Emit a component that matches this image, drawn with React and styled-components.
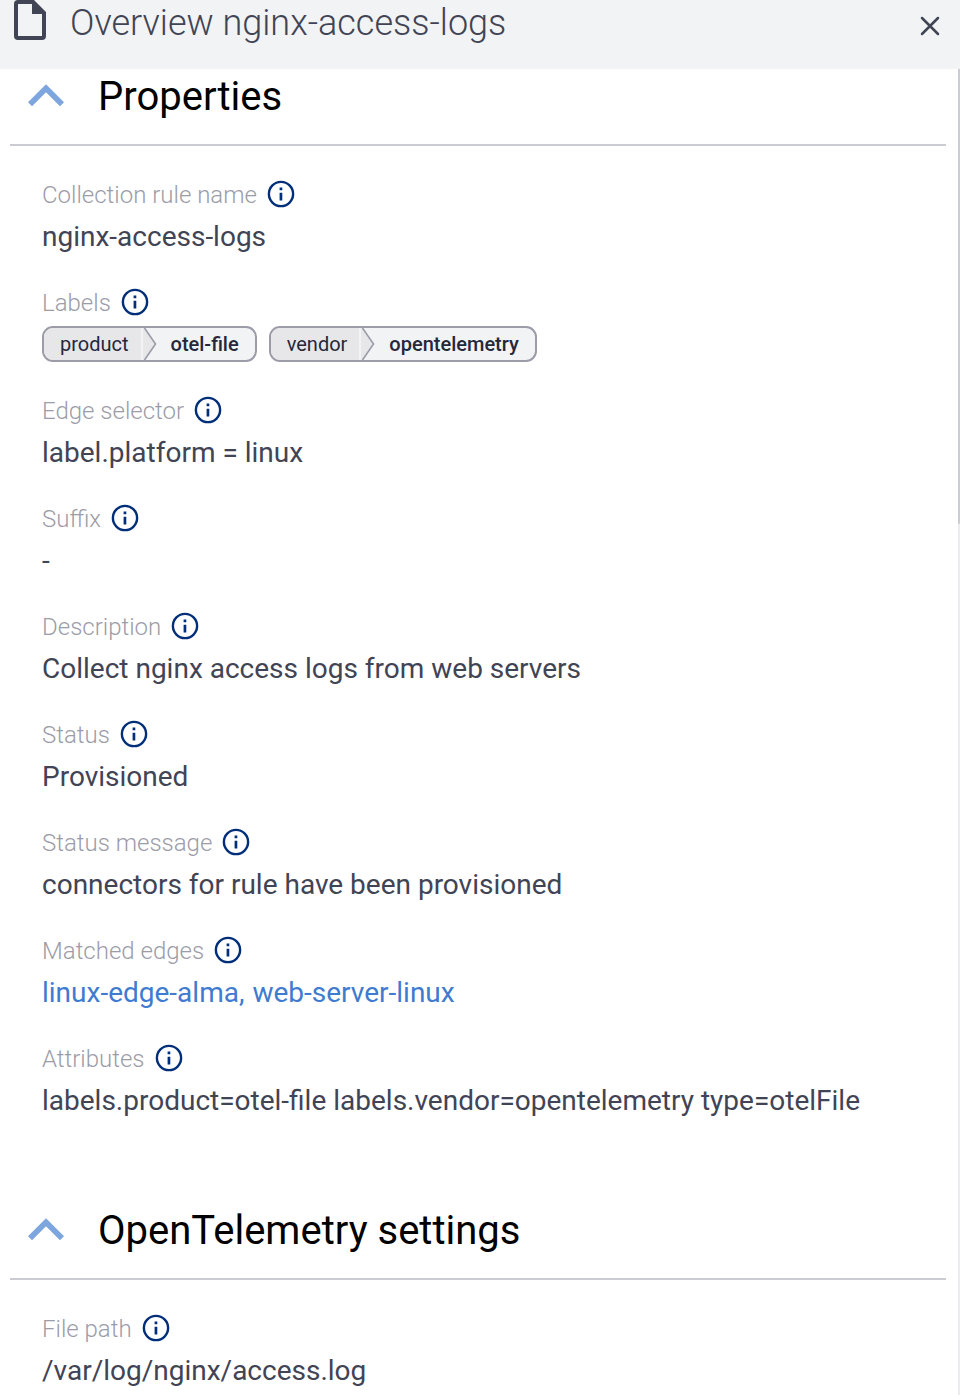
/**
 *
 * App
 *
 * Overview panel of a collection rule, with its collapsible sections
 */
import React from 'react';
import styled, { createGlobalStyle } from 'styled-components';

const GlobalStyle = createGlobalStyle`
  * {
    box-sizing: border-box;
  }
  body {
    margin: 0;
    background: #fff;
    font-family: Roboto, 'Liberation Sans', sans-serif;
    color: #414454;
  }
`;

const Panel = styled.div`
  display: flex;
  flex-direction: column;
  height: 1395px;
  overflow: hidden;
`;

const Header = styled.header`
  display: flex;
  flex: none;
  align-items: flex-start;
  height: 69px;
  padding: 0 20px 0 14px;
  background: #f1f3f5;
`;

const Title = styled.h1`
  flex: 1;
  margin: 0 0 0 24px;
  font-size: 36px;
  font-weight: 300;
  line-height: 46px;
  white-space: nowrap;
`;

const CloseButton = styled.button`
  display: flex;
  margin: 16px 0 0;
  padding: 0;
  border: 0;
  background: none;
`;

const Body = styled.main`
  display: flex;
  flex: 1;
  justify-content: space-between;
  min-height: 0;
`;

const Content = styled.div`
  width: 946px;
  padding-left: 10px;
  overflow: hidden;
`;

const Scrollbar = styled.div`
  width: 2px;
  background: #ececee;
`;

const Thumb = styled.div`
  height: 455px;
  border-radius: 0 0 1px 1px;
  background: #cbcbd2;
`;

const Section = styled.section`
  margin-bottom: 53px;
`;

const SectionHeader = styled.div`
  display: flex;
  align-items: flex-start;
  height: 77px;
  padding-left: 18px;
  border-bottom: 2px solid #cbcbd2;

  svg {
    margin-top: 15px;
  }
`;

const SectionTitle = styled.h2`
  margin: 0 0 0 34px;
  color: #000;
  font-size: 40px;
  font-weight: 400;
  line-height: 56px;
  white-space: nowrap;
`;

const Fields = styled.div`
  padding: 32px 0 0 32px;
`;

const Field = styled.div`
  height: 108px;
`;

const Label = styled.div`
  display: flex;
  gap: 10px;
  height: 32px;
  color: #9c9ca8;
  font-size: 24px;
  font-weight: 300;
  line-height: 34px;
  white-space: nowrap;

  svg {
    margin-top: 2px;
  }
`;

const Value = styled.div`
  display: flex;
  align-items: center;
  gap: 12px;
  height: 52px;
  font-size: 28px;
  white-space: nowrap;
`;

const Links = styled.div`
  color: #3f7bd0;
`;

const Link = styled.a`
  & + & {
    margin-left: 8px;
  }
`;

const Chip = styled.div`
  display: flex;
  height: 36px;
  border: 2px solid #9c9ca8;
  border-radius: 11px;
  background: #f1f3f5;
  color: #25283a;
  font-size: 20px;
  line-height: 32px;
  overflow: hidden;
`;

const ChipKey = styled.span`
  margin-right: 2px;
  padding: 0 12px 0 16px;
  background: #e7e7ea;
`;

const ChipValue = styled.span`
  padding: 0 16px 0 14px;
  font-weight: 500;
`;

const FileIcon = () => (
  <svg width="32" height="40" viewBox="0 0 32 40">
    <path
      fill="#414454"
      fillRule="evenodd"
      d="M4 0H20L32 12V36a4 4 0 0 1-4 4H4a4 4 0 0 1-4-4V4a4 4 0 0 1 4-4ZM4 4V36H28V14H18V4Z"
    />
  </svg>
);

const CloseIcon = () => (
  <svg width="20" height="20" viewBox="0 0 20 20">
    <path d="M2 2L18 18M18 2L2 18" stroke="#414454" strokeWidth="2.5" strokeLinecap="round" />
  </svg>
);

const ChevronIcon = () => (
  <svg width="36" height="23" viewBox="0 0 36 23">
    <path d="M2 20.3L18 4.3L34 20.3" fill="none" stroke="#7ea6de" strokeWidth="5.8" />
  </svg>
);

const InfoIcon = () => (
  <svg width="28" height="28" viewBox="0 0 28 28">
    <circle cx="14" cy="14" r="12.1" fill="none" stroke="#012e78" strokeWidth="2.4" />
    <path d="M12.6 7.6h2.7v2.6h-2.7zM12.6 12.7h2.7v7.8h-2.7z" fill="#012e78" />
  </svg>
);

const ChipArrow = () => (
  <svg width="14" height="32" viewBox="0 0 14 32">
    <path d="M0 0H1.5L12.5 16L1.5 32H0Z" fill="#e7e7ea" />
    <path d="M1.5 0L12.5 16L1.5 32" fill="none" stroke="#9c9ca8" strokeWidth="1.6" />
  </svg>
);

const properties = [
  { label: 'Collection rule name', value: 'nginx-access-logs' },
  {
    label: 'Labels',
    chips: [
      { name: 'product', value: 'otel-file' },
      { name: 'vendor', value: 'opentelemetry' },
    ],
  },
  { label: 'Edge selector', value: 'label.platform = linux' },
  { label: 'Suffix', value: '-' },
  { label: 'Description', value: 'Collect nginx access logs from web servers' },
  { label: 'Status', value: 'Provisioned' },
  { label: 'Status message', value: 'connectors for rule have been provisioned' },
  { label: 'Matched edges', links: ['linux-edge-alma,', 'web-server-linux'] },
  { label: 'Attributes', value: 'labels.product=otel-file labels.vendor=opentelemetry type=otelFile' },
];

const settings = [
  { label: 'File path', value: '/var/log/nginx/access.log' },
];

const renderValue = (item) => {
  if (item.chips) {
    return item.chips.map((chip) => (
      <Chip key={chip.name}>
        <ChipKey>{chip.name}</ChipKey>
        <ChipArrow />
        <ChipValue>{chip.value}</ChipValue>
      </Chip>
    ));
  } else if (item.links) {
    return <Links>{item.links.map((link) => <Link key={link}>{link}</Link>)}</Links>;
  }
  return item.value;
};

const PropertySection = ({ title, items }) => (
  <Section>
    <SectionHeader>
      <ChevronIcon />
      <SectionTitle>{title}</SectionTitle>
    </SectionHeader>
    <Fields>
      {items.map((item) => (
        <Field key={item.label}>
          <Label>
            {item.label}
            <InfoIcon />
          </Label>
          <Value>{renderValue(item)}</Value>
        </Field>
      ))}
    </Fields>
  </Section>
);

const App = () => (
  <Panel>
    <GlobalStyle />
    <Header>
      <FileIcon />
      <Title>Overview nginx-access-logs</Title>
      <CloseButton aria-label="Close">
        <CloseIcon />
      </CloseButton>
    </Header>
    <Body>
      <Content>
        <PropertySection title="Properties" items={properties} />
        <PropertySection title="OpenTelemetry settings" items={settings} />
      </Content>
      <Scrollbar>
        <Thumb />
      </Scrollbar>
    </Body>
  </Panel>
);

export default App;
